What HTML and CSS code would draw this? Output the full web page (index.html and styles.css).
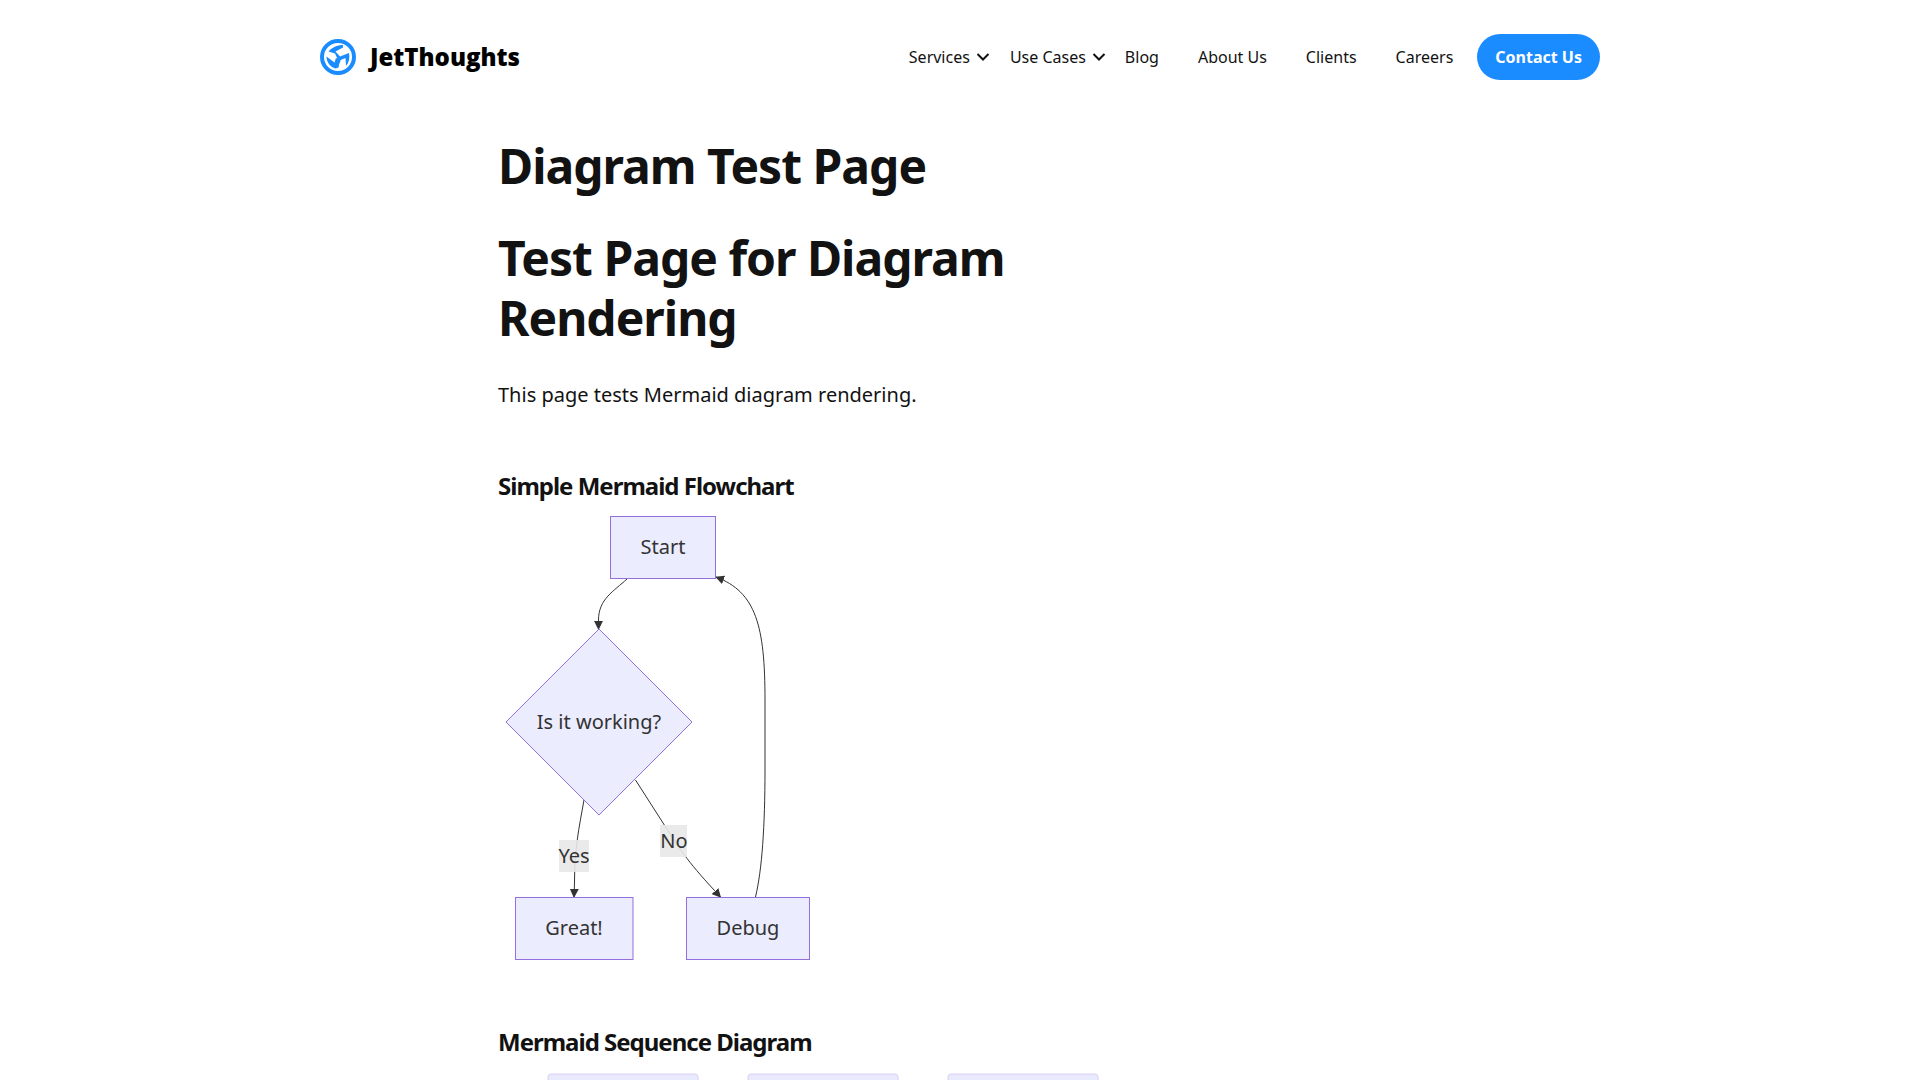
FILE: index.html
```html
<!DOCTYPE html>
<html lang="en">
<head>
<meta charset="utf-8">
<meta name="viewport" content="width=device-width, initial-scale=1">
<title>Diagram Test Page</title>
<link rel="stylesheet" href="styles.css">
</head>
<body>
<header class="header">
  <a class="logo" href="#">
    <svg class="logo-mark" viewBox="0 0 36 36" aria-hidden="true">
      <circle cx="18" cy="18" r="16" fill="none" stroke="#1a8cff" stroke-width="4"/>
      <g fill="#1a8cff">
        <path d="M23 6C17 6 12 8.500 8.500 12.500L15 14.500 17.500 20 15 26.500 17 28.500 20.500 22 20 17.500 15.500 12.500 23 8.500Z"/>
        <path d="M29 14 20 17.500 19.500 21.500 25.500 19 26 27C29 23.500 30 18.500 29 14Z"/>
        <path d="M6.500 17.500C6.500 23 10 28 15.500 29.500L18.500 28.500 20 21 16 19 14.500 23.500Z"/>
      </g>
    </svg>
    <span>JetThoughts</span>
  </a>
  <nav class="nav" aria-label="Main">
    <button class="nav-item nav-toggle" type="button">Services
      <svg class="chevron" viewBox="0 0 14 10" aria-hidden="true"><path d="M1.500 2 7 7.500 12.500 2"/></svg></button>
    <button class="nav-item nav-toggle" type="button">Use Cases
      <svg class="chevron" viewBox="0 0 14 10" aria-hidden="true"><path d="M1.500 2 7 7.500 12.500 2"/></svg></button>
    <a class="nav-item" href="#">Blog</a>
    <a class="nav-item" href="#">About Us</a>
    <a class="nav-item" href="#">Clients</a>
    <a class="nav-item" href="#">Careers</a>
    <a class="contact" href="#">Contact Us</a>
  </nav>
</header>
<main class="content">
  <h1>Diagram Test Page</h1>
  <h1>Test Page for Diagram Rendering</h1>
  <p>This page tests Mermaid diagram rendering.</p>
  <h2>Simple Mermaid Flowchart</h2>
  <svg class="diagram flowchart" width="320" height="458" viewBox="0 0 320 458">
    <defs>
      <marker id="arrow" viewBox="0 0 10 10" refX="9" refY="5" markerWidth="9" markerHeight="9" markerUnits="userSpaceOnUse" orient="auto">
        <path class="arrow-head" d="M0 0 10 5 0 10z"/>
      </marker>
    </defs>
    <path class="edge" marker-end="url(#arrow)" d="M129 71C116 83 100.500 91 100.500 112V121"/>
    <path class="edge" marker-end="url(#arrow)" d="M86 292C81 320 76.500 340 76.500 375L76 389"/>
    <path class="edge" marker-end="url(#arrow)" d="M137.500 272 165.700 316C185 346 190 354 222.500 389"/>
    <path class="edge" marker-end="url(#arrow)" d="M257.500 389C264 362 267 318 267 262V192C267 118 258 84 218 69"/>
    <rect class="node" x="112.500" y="8.500" width="105" height="62"/>
    <path class="node" d="M101 121 194 214 101 307 8 214Z"/>
    <rect class="node" x="17.500" y="389.500" width="117.500" height="62"/>
    <rect class="node" x="188.500" y="389.500" width="123" height="62"/>
    <rect class="label-bg" x="61" y="332" width="30" height="32"/>
    <rect class="label-bg" x="162" y="317" width="27" height="32"/>
    <text x="165" y="46">Start</text>
    <text x="101" y="221">Is it working?</text>
    <text x="76" y="355">Yes</text>
    <text x="176" y="340">No</text>
    <text x="76" y="427">Great!</text>
    <text x="250" y="427">Debug</text>
  </svg>
  <h2>Mermaid Sequence Diagram</h2>
  <svg class="diagram" width="650" height="75" viewBox="-50 -10 650 75" aria-hidden="true">
    <rect class="actor" x="0" y="0" width="150" height="65" rx="3"/>
    <rect class="actor" x="200" y="0" width="150" height="65" rx="3"/>
    <rect class="actor" x="400" y="0" width="150" height="65" rx="3"/>
  </svg>
</main>
</body>
</html>
```
FILE: styles.css
```css
* {
  box-sizing: border-box;
}

body {
  margin: 0;
  background: #fff;
  color: #121212;
  font-family: "Noto Sans", sans-serif;
  font-size: 20px;
  line-height: 30px;
}

.header {
  display: flex;
  align-items: center;
  justify-content: space-between;
  max-width: 1280px;
  margin: 0 auto;
  padding: 34px 0;
}

.logo {
  display: flex;
  align-items: center;
  gap: 14px;
  color: #000;
  font-family: "Open Sans", "Noto Sans", sans-serif;
  font-size: 24px;
  font-weight: 800;
  text-decoration: none;
}

.logo-mark {
  width: 36px;
  height: 36px;
}

.nav {
  display: flex;
  align-items: center;
  font-size: 16px;
  line-height: 24px;
}

.nav-item {
  padding: 0 20px 0 19px;
  color: #121212;
  text-decoration: none;
}

.nav-toggle {
  display: flex;
  align-items: center;
  gap: 6px;
  padding: 0 0 0 20px;
  border: 0;
  background: none;
  font: inherit;
}

.chevron {
  width: 14px;
  height: 10px;
  fill: none;
  stroke: #121212;
  stroke-width: 2;
}

.contact {
  margin-left: 4px;
  padding: 11px 18px;
  border-radius: 23px;
  background: #1a8cff;
  color: #fff;
  font-weight: 700;
  text-decoration: none;
}

.content {
  max-width: 924px;
  margin: 0 auto;
  padding-top: 22px;
}

.content > * {
  max-width: 650px;
}

h1 {
  margin: 0 0 32px;
  font-size: 48px;
  line-height: 60px;
  font-weight: 700;
  letter-spacing: -1px;
}

p {
  margin: 0;
}

h2 {
  margin: 60px 0 6px;
  font-size: 24px;
  line-height: 32px;
  font-weight: 700;
  letter-spacing: -1px;
}

.diagram {
  display: block;
}

.diagram text {
  fill: #333;
  text-anchor: middle;
}

.node {
  fill: #ececff;
  stroke: #9370db;
}

.edge {
  fill: none;
  stroke: #333;
}

.arrow-head {
  fill: #333;
}

.label-bg {
  fill: #e8e8e8;
  fill-opacity: 0.9;
}

.actor {
  fill: #eaeaff;
  stroke: #dacef2;
}
```
